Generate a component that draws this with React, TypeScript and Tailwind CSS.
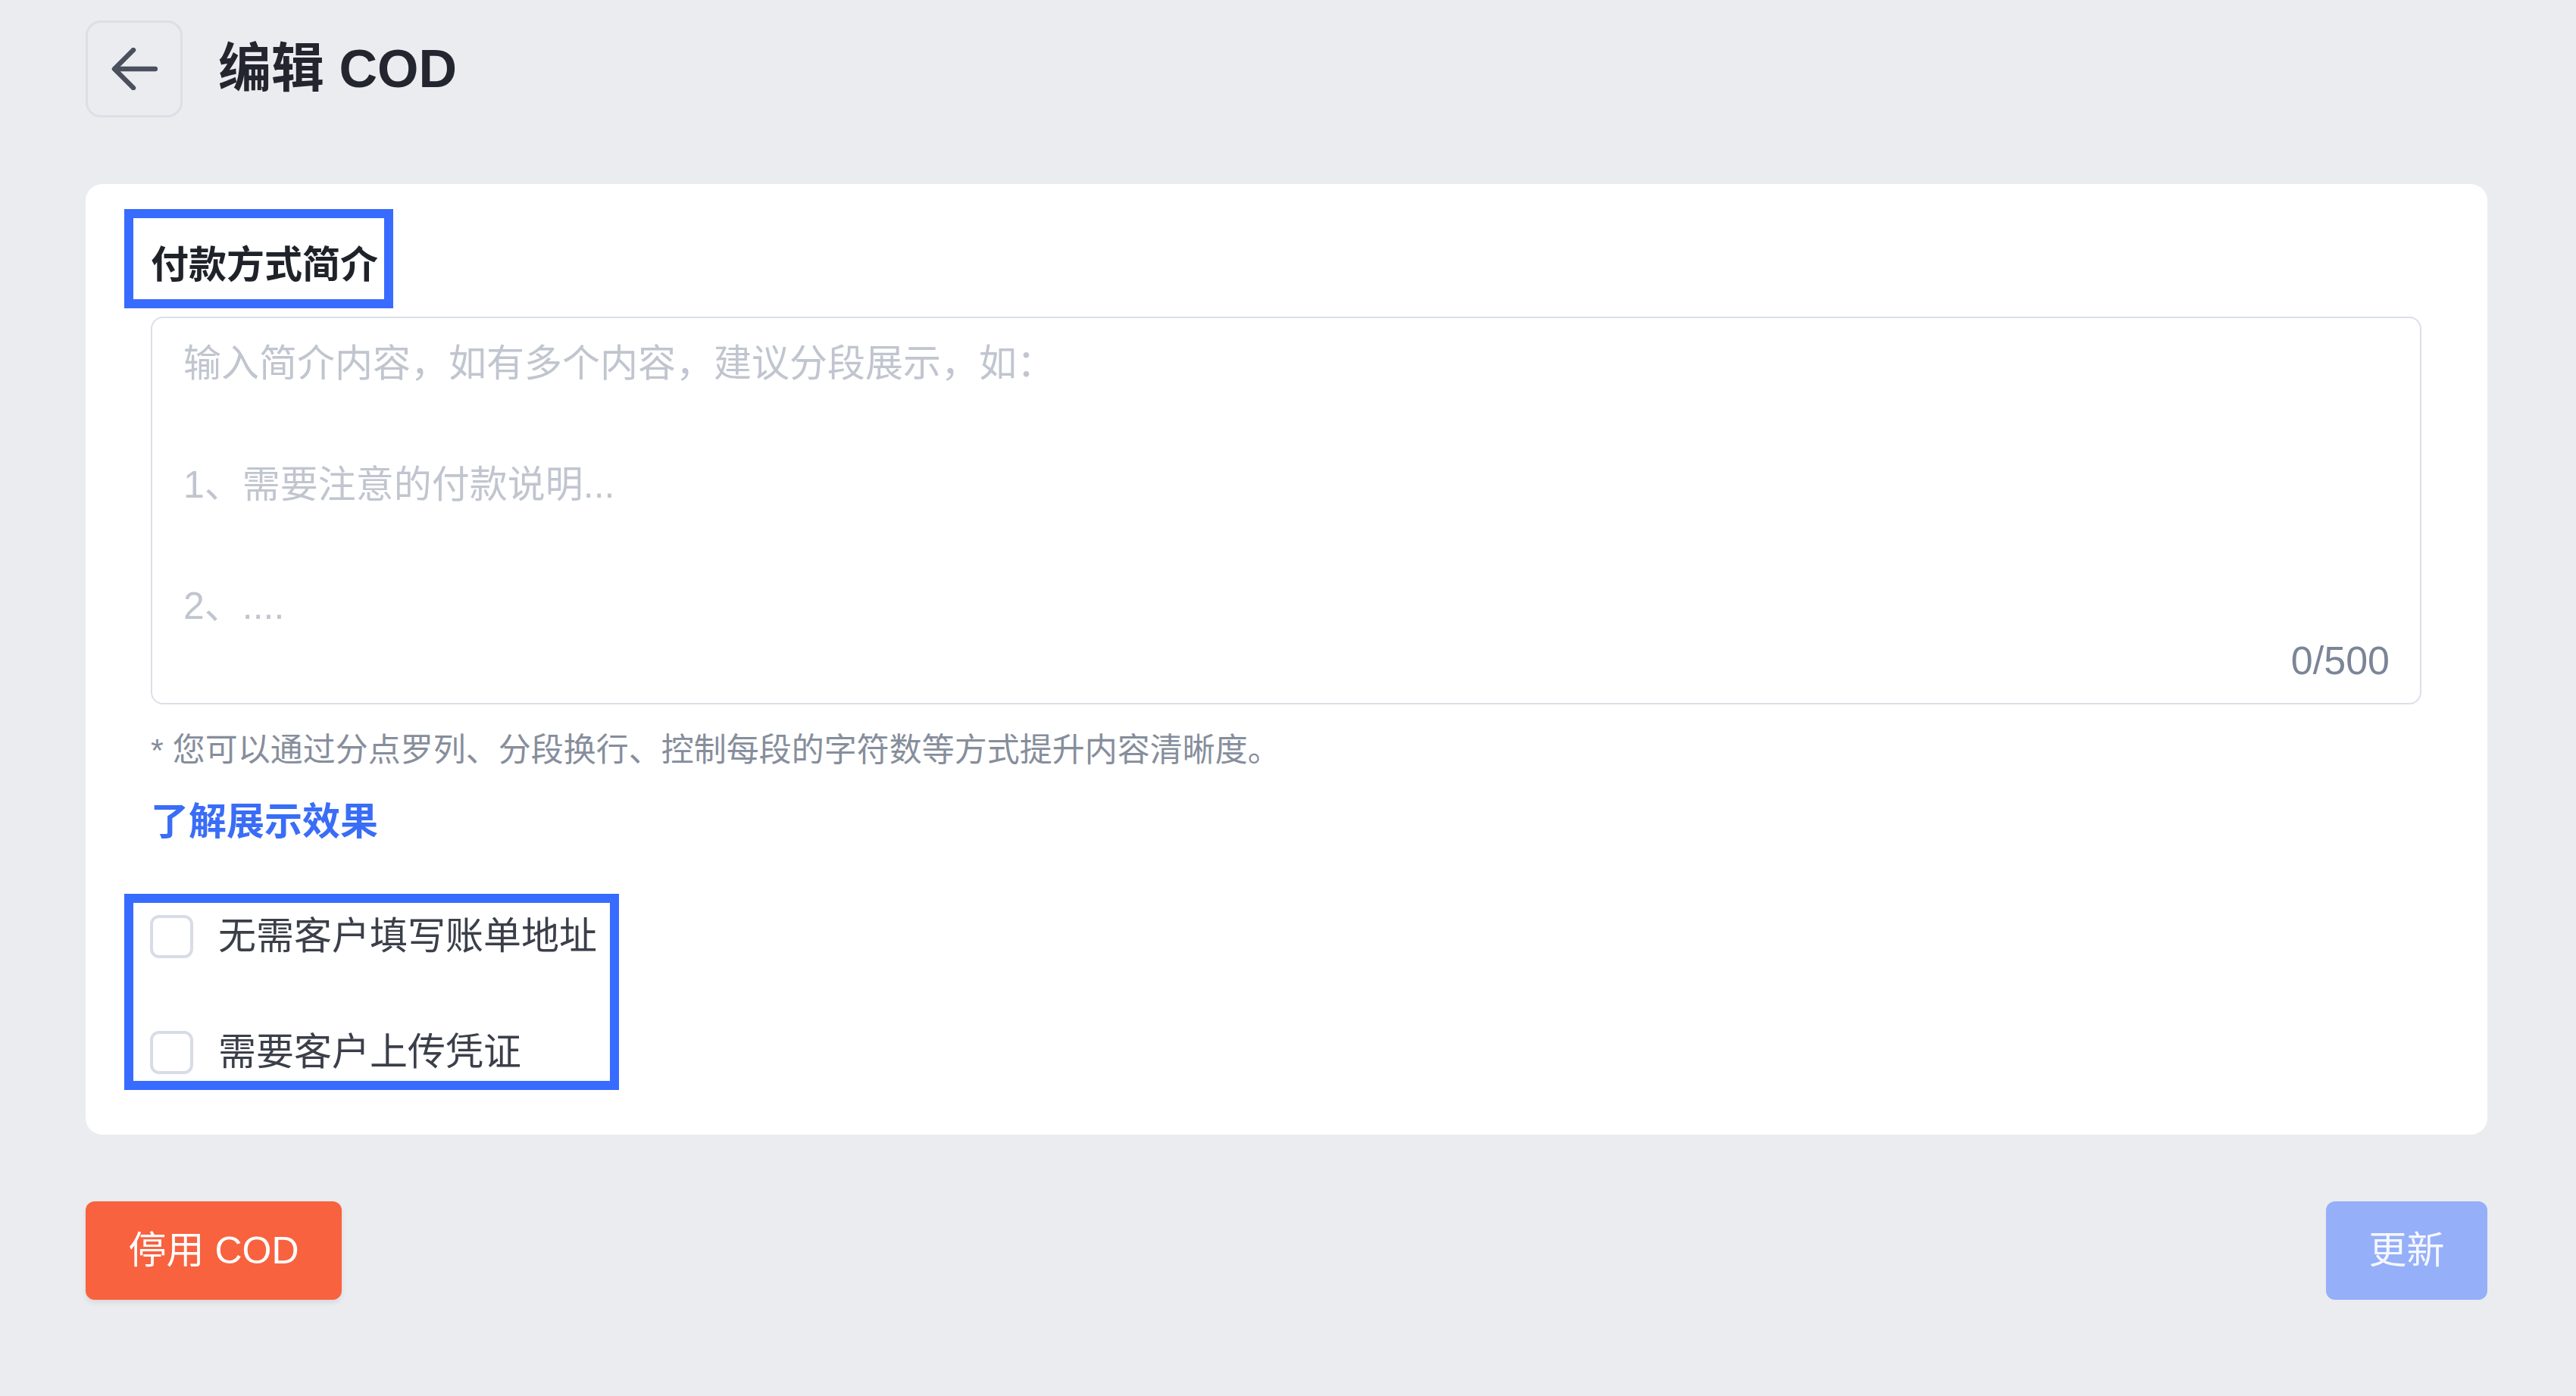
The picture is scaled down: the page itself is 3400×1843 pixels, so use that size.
import { useState } from 'react';

const FONT = "font-['Liberation_Sans','Noto_Sans_CJK_SC',sans-serif]";

function BackArrow() {
    return (
        <svg width="62" height="56" viewBox="0 0 62 56" fill="none">
            <path d="M59 28H6" stroke="#4a505d" strokeWidth="6.5" strokeLinecap="round" />
            <path d="M30 3L5 28L30 53" stroke="#4a505d" strokeWidth="6.5" strokeLinecap="round" strokeLinejoin="round" />
        </svg>
    );
}

function CheckRow({ label, checked, onToggle }: { label: string; checked: boolean; onToggle: () => void }) {
    return (
        <label className="flex h-[64px] cursor-pointer items-center gap-[33px]" onClick={onToggle}>
            <span
                className={`flex h-[57px] w-[57px] shrink-0 items-center justify-center rounded-[12px] border-[4px] ${checked ? 'border-[#386bff] bg-[#386bff]' : 'border-[#d8dce6] bg-white'}`}
            >
                {checked && (
                    <svg width="30" height="30" viewBox="0 0 24 24" fill="none">
                        <path d="M5 12.5l4.5 4.5L19 7.5" stroke="white" strokeWidth="3" strokeLinecap="round" strokeLinejoin="round" />
                    </svg>
                )}
            </span>
            <span className="text-[50px] leading-[60px] text-[#3b3f4a]">{label}</span>
        </label>
    );
}

export default function App() {
    const [intro, setIntro] = useState('');
    const [noBilling, setNoBilling] = useState(false);
    const [needProof, setNeedProof] = useState(false);

    return (
        <div className={`min-h-[1843px] bg-[#ebecf0] pl-[113px] pr-[117px] pt-[27px] ${FONT}`}>
            {/* header */}
            <div className="flex h-[128px] items-center gap-[47px]">
                <button
                    type="button"
                    className="flex h-[128px] w-[128px] items-center justify-center rounded-[20px] border-[3px] border-[#dcdfe7]"
                >
                    <BackArrow />
                </button>
                <h1 className="text-[70px] font-bold leading-none text-[#23262f]">编辑 COD</h1>
            </div>

            {/* card */}
            <div className="mt-[88px] rounded-[22px] bg-white pb-[59px] pl-[51px] pr-[52px] pt-[33px]">
                <div className="inline-block border-[12px] border-[#386bff] pb-[15px] pl-[23px] pr-[8px] pt-[32px]">
                    <span className="block text-[50px] font-bold leading-[60px] text-[#1f2229]">付款方式简介</span>
                </div>

                <div className="px-[35px]">
                    <div className="relative mt-[11px]">
                        <textarea
                            value={intro}
                            maxLength={500}
                            onChange={(e) => setIntro(e.target.value)}
                            placeholder={'输入简介内容，如有多个内容，建议分段展示，如：\n\n1、需要注意的付款说明...\n\n2、....'}
                            className="block h-[512px] w-full resize-none rounded-[16px] border-[2px] border-[#dcdfe7] pl-[41px] pr-[42px] pt-[20px] text-[50px] leading-[80px] text-[#3f434e] outline-none placeholder:text-[#c0c5cf]"
                        />
                        <span className="absolute bottom-[32px] right-[42px] text-[52px] leading-[52px] text-[#7b8597]">
                            {intro.length}/500
                        </span>
                    </div>

                    <p className="mt-[30px] text-[43px] leading-[60px] text-[#868e9c]">
                        * 您可以通过分点罗列、分段换行、控制每段的字符数等方式提升内容清晰度。
                    </p>

                    <a href="#" className="mt-[35px] block w-fit text-[50px] font-bold leading-[60px] text-[#3a6df7]">
                        了解展示效果
                    </a>
                </div>

                <div className="mt-[65px] inline-flex flex-col gap-[89px] border-[12px] border-[#386bff] pb-[6px] pl-[22px] pr-[17px] pt-[12px]">
                    <CheckRow label="无需客户填写账单地址" checked={noBilling} onToggle={() => setNoBilling(!noBilling)} />
                    <CheckRow label="需要客户上传凭证" checked={needProof} onToggle={() => setNeedProof(!needProof)} />
                </div>
            </div>

            {/* footer buttons */}
            <div className="mt-[88px] flex items-center justify-between">
                <button
                    type="button"
                    className="flex h-[130px] w-[338px] items-center justify-center rounded-[12px] bg-[#f8623f] text-[50px] text-white shadow-[0_4px_6px_rgba(0,0,0,0.08)]"
                >
                    停用 COD
                </button>
                <button
                    type="button"
                    disabled
                    className="flex h-[130px] w-[213px] items-center justify-center rounded-[12px] bg-[#95aff9] text-[50px] text-[#f5f7fe]"
                >
                    更新
                </button>
            </div>
        </div>
    );
}
